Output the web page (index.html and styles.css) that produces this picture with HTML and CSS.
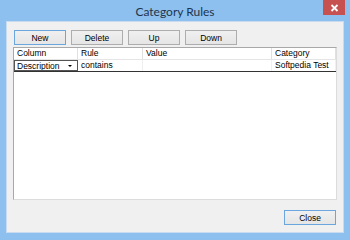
FILE: index.html
```html
<!DOCTYPE html>
<html>
<head>
<meta charset="utf-8">
<link rel="stylesheet" href="styles.css">
</head>
<body>
<div class="window">
  <div class="titlebar">
    <div class="title">Category Rules</div>
    <div class="close-x"><svg width="9" height="8" viewBox="0 0 9 8"><path d="M1.5 1 L7.5 7 M7.5 1 L1.5 7" stroke="#fff" stroke-width="1.8"/></svg></div>
  </div>
  <div class="client">
    <div class="toolbar">
      <button class="btn default">New</button>
      <button class="btn">Delete</button>
      <button class="btn">Up</button>
      <button class="btn">Down</button>
    </div>
    <div class="list">
      <div class="row head">
        <div class="c c1">Column</div>
        <div class="c c2">Rule</div>
        <div class="c c3">Value</div>
        <div class="c c4">Category</div>
      </div>
      <div class="row item">
        <div class="c c1 combo"><span>Description</span><span class="arrow"></span></div>
        <div class="c c2">contains</div>
        <div class="c c3"></div>
        <div class="c c4">Softpedia Test</div>
      </div>
    </div>
    <div class="footer">
      <button class="btn default close">Close</button>
    </div>
  </div>
</div>
</body>
</html>
```
FILE: styles.css
```css
* { box-sizing: border-box; }
html, body { margin: 0; padding: 0; }
body {
  width: 350px; height: 240px; overflow: hidden;
  font-family: "Liberation Sans", Arial, sans-serif;
}
.window {
  width: 350px; height: 240px;
  background: #8dc0ef;
  display: flex; flex-direction: column;
  padding: 0 6px 7px 6px;
}
.titlebar {
  height: 22px; position: relative;
  display: flex; align-items: center; justify-content: center;
}
.title {
  font-family: Lato, "Open Sans", sans-serif;
  font-size: 12px; color: #1f344a; padding-top: 2px;
}
.close-x {
  position: absolute; right: -1px; top: 0;
  width: 22px; height: 15px; background: #c75050;
  display: flex; align-items: center; justify-content: center;
}
.client {
  flex: 1; background: #f0f0f0;
  border: 1px solid #c9dcef;
  display: flex; flex-direction: column;
  padding: 8px 6px 7px 6px;
}
.toolbar { display: flex; gap: 5px; padding-left: 1px; height: 15px; }
.btn {
  width: 52px; height: 15px; padding: 0;
  font-family: "Liberation Sans", Arial, sans-serif;
  font-size: 8.5px; color: #000;
  border: 1px solid #adadad;
  background: linear-gradient(#f0f0f0, #e5e5e5);
}
.btn.default { border-color: #6ba6df; }
.list {
  margin-top: 2px; height: 153px;
  background: #fff; border: 1px solid #828790;
  border-color: #a8a8a8 #dcdcdc #dcdcdc #a8a8a8;
}
.row { display: flex; height: 12px; }
.c {
  font-size: 8.5px; line-height: 11px; padding-left: 3px; color: #000;
  white-space: nowrap; overflow: hidden;
}
.c1 { width: 64px; }
.c2 { width: 65px; }
.c3 { width: 129px; }
.c4 { width: 64px; }
.head { border-bottom: 1px solid #e5e5e5; }
.head .c { border-right: 1px solid #e0e0e0; }
.item { height: 12px; border-bottom: 1px solid #333; }
.item .c { border-right: 1px solid #f0f0f0; }
.combo {
  border: 1px solid #555 !important;
  display: flex; justify-content: space-between; align-items: center;
  padding-left: 2px; line-height: 10px;
}
.arrow {
  width: 0; height: 0; margin-right: 5px;
  border-left: 2px solid transparent; border-right: 2px solid transparent;
  border-top: 2px solid #000;
}
.footer { margin-top: 10px; display: flex; justify-content: flex-end; padding-right: 1px; }
.close { width: 52px; height: 15px; }
```
